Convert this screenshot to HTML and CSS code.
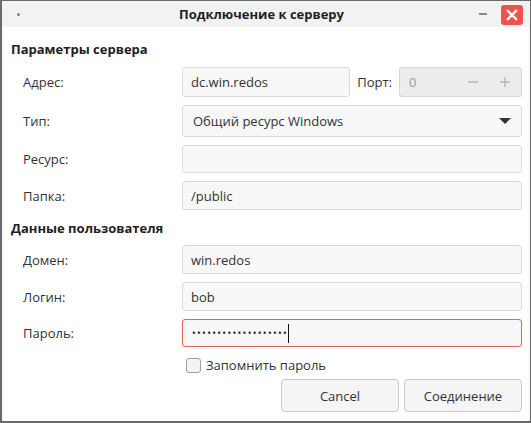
FILE: index.html
```html
<!DOCTYPE html>
<html lang="ru">
<head>
  <meta charset="UTF-8" />
  <title>Подключение к серверу</title>
  <link rel="stylesheet" href="styles.css">
</head>
<body>
  <div class="window">
    <div class="titlebar">
      <span class="tb-dot"></span>
      <span class="tb-title">Подключение к серверу</span>
      <span class="tb-min"></span>
      <span class="tb-close">
        <svg width="12" height="12" viewBox="0 0 12 12">
          <path d="M2 2 L10 10 M10 2 L2 10" stroke="#fff" stroke-width="2.4" stroke-linecap="square"/>
        </svg>
      </span>
    </div>

    <div class="content">
      <h3 class="section-title">Параметры сервера</h3>
      <div class="form-grid">
        <label class="row-label h30">Адрес:</label>
        <div class="field-row h30">
          <div class="entry grow">dc.win.redos</div>
          <span class="port-label">Порт:</span>
          <div class="spin">
            <span class="spin-value">0</span>
            <span class="spin-btn">
              <svg width="12" height="12" viewBox="0 0 12 12"><path d="M1 6 H11" stroke="#b8b8b8" stroke-width="1.5"/></svg>
            </span>
            <span class="spin-btn">
              <svg width="12" height="12" viewBox="0 0 12 12"><path d="M1 6 H11 M6 1 V11" stroke="#b8b8b8" stroke-width="1.5"/></svg>
            </span>
          </div>
        </div>

        <label class="row-label h32">Тип:</label>
        <div class="combo h32">
          <span>Общий ресурс Windows</span>
          <svg width="12" height="7" viewBox="0 0 12 7"><path d="M0 0 H12 L6 6 Z" fill="#2e3436"/></svg>
        </div>

        <label class="row-label h28">Ресурс:</label>
        <div class="entry h28"></div>

        <label class="row-label h29">Папка:</label>
        <div class="entry h29">/public</div>
      </div>

      <h3 class="section-title second">Данные пользователя</h3>
      <div class="form-grid">
        <label class="row-label h29">Домен:</label>
        <div class="entry h29">win.redos</div>

        <label class="row-label h29">Логин:</label>
        <div class="entry h29">bob</div>

        <label class="row-label h28">Пароль:</label>
        <div class="entry h28 error">
          <span class="dots">•••••••••••••••••••</span><span class="caret"></span>
        </div>

        <span></span>
        <label class="check-row">
          <span class="checkbox"></span>
          Запомнить пароль
        </label>
      </div>

      <div class="actions">
        <button class="btn">Cancel</button>
        <button class="btn">Соединение</button>
      </div>
    </div>
  </div>
</body>
</html>
```

FILE: styles.css
```css
* {
  margin: 0;
  padding: 0;
  box-sizing: border-box;
}

body {
  font-family: "Open Sans", "Noto Sans", sans-serif;
  font-size: 13px;
  color: #2e3436;
  background: #ffffff;
}

.window {
  width: 531px;
  height: 423px;
  border-top: 1px solid #6a6a6a;
  border-left: 2px solid #6a6a6a;
  border-right: 1px solid #6a6a6a;
  border-bottom: 2px solid #6a6a6a;
  background: #f2f2f2;
  display: flex;
  flex-direction: column;
}

/* title bar */
.titlebar {
  height: 27px;
  display: flex;
  align-items: center;
  padding: 0 6px 0 0;
}

.tb-dot {
  width: 3px;
  height: 3px;
  border-radius: 50%;
  background: #808080;
  margin-left: 15px;
}

.tb-title {
  flex: 1;
  text-align: center;
  font-weight: bold;
  font-size: 13px;
  color: #1f1f1f;
  padding-left: 24px;
}

.tb-min {
  width: 8px;
  height: 2px;
  background: #888;
  margin-right: 14px;
}

.tb-close {
  width: 22px;
  height: 20px;
  border-radius: 3px;
  background: #ef5350;
  display: flex;
  align-items: center;
  justify-content: center;
  margin-top: 1px;
  margin-right: 1px;
}

/* content */
.content {
  flex: 1;
  background: #ffffff;
  margin: 0 1px 0 1px;
  padding: 12px 7px 9px 8px;
  display: flex;
  flex-direction: column;
}

.section-title {
  font-size: 13px;
  font-weight: bold;
  line-height: 20px;
  color: #222;
  margin-bottom: 8px;
}

.section-title.second {
  margin-top: 8px;
  margin-bottom: 7px;
}

.form-grid {
  display: grid;
  grid-template-columns: 159px 1fr;
  row-gap: 8px;
  padding-left: 12px;
}

.row-label {
  display: flex;
  align-items: center;
  color: #2e3436;
}

.h28 { height: 28px; }
.h29 { height: 29px; }
.h30 { height: 30px; }
.h32 { height: 32px; }

.field-row {
  display: flex;
  align-items: stretch;
}

.entry {
  background: #f8f8f8;
  border: 1px solid #dadada;
  border-radius: 3px;
  padding: 0 8px;
  display: flex;
  align-items: center;
  color: #2e3436;
}

.entry.grow {
  flex: 1;
}

.entry.error {
  border-color: #e0605c;
}

.dots {
  font-size: 10px;
  letter-spacing: 1.3px;
  color: #1e2224;
  padding-left: 1px;
}

.caret {
  width: 1px;
  height: 19px;
  background: #111;
  margin-left: 0;
}

.port-label {
  display: flex;
  align-items: center;
  padding: 0 7px 0 7px;
}

.spin {
  width: 123px;
  background: #ececec;
  border: 1px solid #d6d6d6;
  border-radius: 3px;
  display: flex;
  align-items: center;
  padding-left: 9px;
}

.spin-value {
  flex: 1;
  color: #9a9a9a;
}

.spin-btn {
  width: 32px;
  display: flex;
  justify-content: center;
}

.combo {
  background: #f8f8f8;
  border: 1px solid #dadada;
  border-radius: 3px;
  padding: 0 10px 0 10px;
  display: flex;
  align-items: center;
  justify-content: space-between;
}

.check-row {
  display: flex;
  align-items: center;
  gap: 5px;
  height: 18px;
  padding-left: 4px;
  margin-top: 1px;
}

.checkbox {
  width: 15px;
  height: 15px;
  border: 1px solid #9e9e9e;
  border-radius: 3px;
  background: #f4f4f4;
}

.actions {
  display: flex;
  justify-content: flex-end;
  gap: 5px;
  margin-top: 5px;
}

.btn {
  width: 118px;
  height: 33px;
  font-family: inherit;
  font-size: 13px;
  color: #2e3436;
  background: #f5f5f5;
  border: 1px solid #c9c9c9;
  border-radius: 4px;
}
```
